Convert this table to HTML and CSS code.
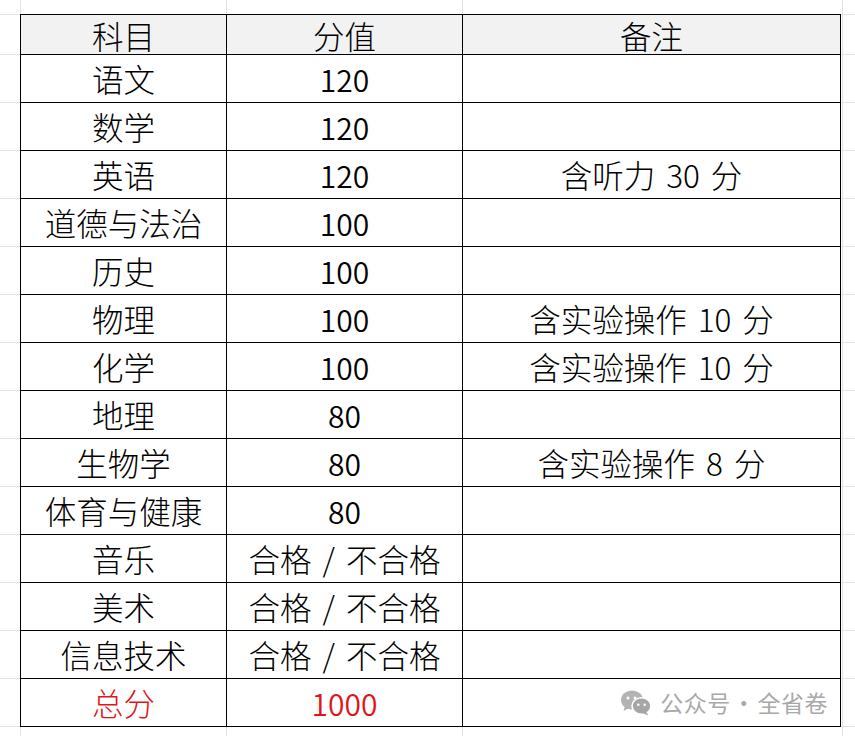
FILE: index.html
```html
<!DOCTYPE html>
<html lang="zh-CN">
<head>
<meta charset="utf-8">
<title>科目分值</title>
<link rel="stylesheet" href="styles.css">
</head>
<body>
<div class="sheet">
  <div class="table">
    <div class="cell head">科目</div>
    <div class="cell head">分值</div>
    <div class="cell head">备注</div>

    <div class="cell">语文</div><div class="cell num">120</div><div class="cell"></div>
    <div class="cell">数学</div><div class="cell num">120</div><div class="cell"></div>
    <div class="cell">英语</div><div class="cell num">120</div><div class="cell">含听力 30 分</div>
    <div class="cell">道德与法治</div><div class="cell num">100</div><div class="cell"></div>
    <div class="cell">历史</div><div class="cell num">100</div><div class="cell"></div>
    <div class="cell">物理</div><div class="cell num">100</div><div class="cell">含实验操作 10 分</div>
    <div class="cell">化学</div><div class="cell num">100</div><div class="cell">含实验操作 10 分</div>
    <div class="cell">地理</div><div class="cell num">80</div><div class="cell"></div>
    <div class="cell">生物学</div><div class="cell num">80</div><div class="cell">含实验操作 8 分</div>
    <div class="cell">体育与健康</div><div class="cell num">80</div><div class="cell"></div>
    <div class="cell">音乐</div><div class="cell">合格 / 不合格</div><div class="cell"></div>
    <div class="cell">美术</div><div class="cell">合格 / 不合格</div><div class="cell"></div>
    <div class="cell">信息技术</div><div class="cell">合格 / 不合格</div><div class="cell"></div>
    <div class="cell red">总分</div><div class="cell num red">1000</div>
    <div class="cell mark">
      <span class="wm">
        <svg class="wx" viewBox="0 0 32 26" width="32" height="26" aria-hidden="true">
          <ellipse cx="12" cy="10" rx="11" ry="9.5" fill="#b3b3b3"/>
          <path d="M5 16 L3.5 21 L9.5 18 Z" fill="#b3b3b3"/>
          <ellipse cx="21.5" cy="16" rx="9.5" ry="8.3" fill="#a6a6a6" stroke="#fff" stroke-width="1.6"/>
          <path d="M26 21.5 L28.5 25.5 L22 23 Z" fill="#a6a6a6"/>
          <circle cx="8" cy="8" r="1.5" fill="#fff"/>
          <circle cx="15" cy="8" r="1.5" fill="#fff"/>
          <circle cx="18.3" cy="14.8" r="1.3" fill="#fff"/>
          <circle cx="24.7" cy="14.8" r="1.3" fill="#fff"/>
        </svg>
        <span class="wm-text">公众号 · 全省卷</span>
      </span>
    </div>
  </div>
</div>
</body>
</html>
```

FILE: styles.css
```css
html, body {
  margin: 0;
  padding: 0;
  background: #fff;
}

.sheet {
  width: 855px;
  height: 736px;
  box-sizing: border-box;
  padding: 14px 0 0 20px;
  overflow: hidden;
  background-color: #fff;
  background-image:
    linear-gradient(#e3e3e3, #e3e3e3),
    repeating-linear-gradient(to bottom, #e3e3e3 0 1px, transparent 1px 48px),
    linear-gradient(#e3e3e3, #e3e3e3),
    linear-gradient(#e3e3e3, #e3e3e3),
    linear-gradient(#e3e3e3, #e3e3e3),
    linear-gradient(#e3e3e3, #e3e3e3);
  background-size:
    100% 1px,
    100% 682px,
    1px 100%,
    1px 100%,
    1px 100%,
    1px 100%;
  background-position:
    0 14px,
    0 54px,
    20px 0,
    226px 0,
    462px 0,
    842px 0;
  background-repeat: no-repeat;
}

.table {
  display: grid;
  grid-template-columns: 206px 236px 378px;
  grid-auto-rows: 48px;
  grid-template-rows: 40px;
  width: max-content;
  border-left: 1px solid #000;
  border-top: 1px solid #000;
  background: #fff;
  font-family: "Noto Sans CJK SC", "Noto Sans", sans-serif;
  font-weight: 300;
  font-size: 31.5px;
  word-spacing: 4px;
  color: #000;
}

.cell {
  box-sizing: border-box;
  border-right: 1px solid #000;
  border-bottom: 1px solid #000;
  display: flex;
  align-items: center;
  justify-content: center;
  padding-top: 1px;
  line-height: 1;
  white-space: nowrap;
}

.head {
  background: #f2f2f2;
  padding-top: 3px;
}

.num {
  font-size: 30px;
  font-weight: 350;
}

.red {
  color: #e0141a;
}

.mark {
  justify-content: flex-end;
  padding: 0 12px 0 0;
  word-spacing: 0;
}

.wm {
  display: flex;
  align-items: center;
  gap: 8px;
}

.wx {
  display: block;
}

.wm-text {
  font-family: "Noto Sans CJK SC", sans-serif;
  font-weight: 400;
  font-size: 23px;
  color: #a8a8a8;
  letter-spacing: 0.5px;
  word-spacing: -4px;
}
```
